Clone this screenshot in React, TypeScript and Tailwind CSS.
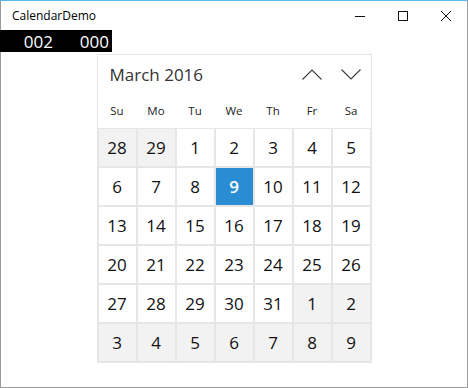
const font = { fontFamily: '"Open Sans", "Noto Sans", sans-serif' }

type Day = { n: number; out?: boolean; sel?: boolean }

function buildDays(): Day[] {
  const days: Day[] = [{ n: 28, out: true }, { n: 29, out: true }]
  for (let i = 1; i <= 31; i++) days.push({ n: i, sel: i === 9 })
  for (let i = 1; i <= 9; i++) days.push({ n: i, out: true })
  return days
}

const weekdays = ['Su', 'Mo', 'Tu', 'We', 'Th', 'Fr', 'Sa']

function Chevron({ up }: { up?: boolean }) {
  return (
    <svg width="20" height="11" viewBox="0 0 20 11" fill="none">
      <path
        d={up ? 'M0.5 10.5 L10 1 L19.5 10.5' : 'M0.5 0.5 L10 10 L19.5 0.5'}
        stroke="#3a3a3a"
        strokeWidth="1.1"
      />
    </svg>
  )
}

export default function App() {
  const days = buildDays()
  return (
    <div
      className="box-border flex h-[388px] w-[468px] flex-col border border-[#9b9b9b] border-t-[#5cb5ee] bg-white"
      style={font}
    >
      <div className="flex h-[29px] shrink-0 items-center">
        <span className="pl-[11px] text-[12px] leading-none text-black">CalendarDemo</span>
        <div className="ml-auto flex h-full">
          <div className="flex w-[43px] items-center justify-center">
            <svg width="10" height="10" viewBox="0 0 10 10">
              <path d="M0 5.5 H10" stroke="#111" strokeWidth="1" />
            </svg>
          </div>
          <div className="flex w-[43px] items-center justify-center">
            <svg width="10" height="10" viewBox="0 0 10 10">
              <rect x="0.5" y="0.5" width="9" height="9" fill="none" stroke="#111" strokeWidth="1" />
            </svg>
          </div>
          <div className="flex w-[43px] items-center justify-center">
            <svg width="10" height="10" viewBox="0 0 10 10">
              <path d="M0 0 L10 10 M10 0 L0 10" stroke="#111" strokeWidth="1" />
            </svg>
          </div>
        </div>
      </div>

      <div className="-ml-px flex h-[22px] w-[112px] bg-black text-[17px] leading-none text-white">
        <span className="flex w-[56px] items-center justify-end pr-[3px]">002</span>
        <span className="flex w-[56px] items-center justify-end pr-[3px]">000</span>
      </div>

      <div className="mx-auto mt-[2px] box-border w-[275px] border border-[#e6e6e6]">
        <div className="flex h-[38px] items-center">
          <span className="pl-[12px] text-[17px] leading-none text-[#333]">March 2016</span>
          <div className="ml-auto flex">
            <div className="flex w-[39px] justify-center">
              <Chevron up />
            </div>
            <div className="flex w-[39px] justify-center">
              <Chevron />
            </div>
          </div>
        </div>
        <div className="grid h-[35px] grid-cols-7 items-center">
          {weekdays.map((w) => (
            <span key={w} className="text-center text-[11.5px] leading-none text-[#222]">
              {w}
            </span>
          ))}
        </div>
        <div className="grid grid-cols-[repeat(7,39px)] grid-rows-[repeat(6,39px)]">
          {days.map((d, i) => (
            <div
              key={i}
              className={
                'box-border flex items-center justify-center border border-[#e6e6e6] text-[17px] leading-none ' +
                (d.sel
                  ? 'border-[#e6e6e6] font-semibold text-white'
                  : d.out
                    ? 'bg-[#f2f2f2] text-[#111]'
                    : 'bg-white text-[#111]')
              }
            >
              {d.sel ? (
                <div className="flex h-full w-full items-center justify-center bg-[#2a8dd3]">{d.n}</div>
              ) : (
                d.n
              )}
            </div>
          ))}
        </div>
      </div>
    </div>
  )
}
